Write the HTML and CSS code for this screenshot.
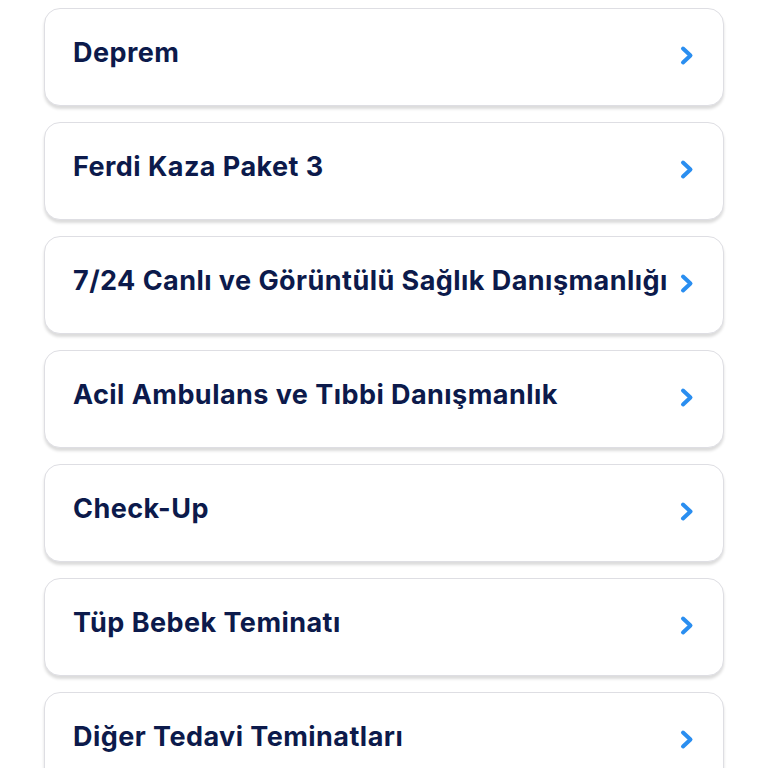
FILE: index.html
```html
<!DOCTYPE html>
<html lang="tr">
<head>
    <meta charset="UTF-8">
    <meta name="viewport" content="width=device-width, initial-scale=1.0">
    <title>Teminatlar</title>
    <link rel="stylesheet" href="styles.css">
</head>
<body>
    <div class="list">
        <div class="item"><span class="label">Deprem</span><svg class="chev" viewBox="0 0 14 21"><path d="M3 3.5l7.5 7-7.5 7"/></svg></div>
        <div class="item"><span class="label">Ferdi Kaza Paket 3</span><svg class="chev" viewBox="0 0 14 21"><path d="M3 3.5l7.5 7-7.5 7"/></svg></div>
        <div class="item"><span class="label">7/24 Canlı ve Görüntülü Sağlık Danışmanlığı</span><svg class="chev" viewBox="0 0 14 21"><path d="M3 3.5l7.5 7-7.5 7"/></svg></div>
        <div class="item"><span class="label">Acil Ambulans ve Tıbbi Danışmanlık</span><svg class="chev" viewBox="0 0 14 21"><path d="M3 3.5l7.5 7-7.5 7"/></svg></div>
        <div class="item"><span class="label">Check-Up</span><svg class="chev" viewBox="0 0 14 21"><path d="M3 3.5l7.5 7-7.5 7"/></svg></div>
        <div class="item"><span class="label">Tüp Bebek Teminatı</span><svg class="chev" viewBox="0 0 14 21"><path d="M3 3.5l7.5 7-7.5 7"/></svg></div>
        <div class="item"><span class="label">Diğer Tedavi Teminatları</span><svg class="chev" viewBox="0 0 14 21"><path d="M3 3.5l7.5 7-7.5 7"/></svg></div>
    </div>
</body>
</html>
```

FILE: styles.css
```css
body {
    margin: 0;
    padding: 0;
    background-color: #ffffff;
    font-family: Inter, "Noto Sans", sans-serif;
    overflow: hidden;
}
.list {
    display: flex;
    flex-direction: column;
    gap: 16px;
    padding: 8px 44px 0 44px;
}
.item {
    height: 96px;
    border: 1px solid #dedee3;
    border-radius: 16px;
    box-shadow: 0 3px 3px rgba(0, 0, 0, 0.14);
    display: flex;
    align-items: flex-start;
    justify-content: space-between;
    padding: 0 29px 0 28px;
    box-sizing: content-box;
    background: #fff;
}
.label {
    margin-top: 27px;
    font-size: 27px;
    font-weight: 700;
    color: #0c1a4b;
    letter-spacing: 0.45px;
    white-space: nowrap;
}
.chev {
    width: 14px;
    height: 21px;
    margin-top: 36px;
    fill: none;
    stroke: #2a8ef0;
    stroke-width: 4;
    stroke-linecap: round;
    stroke-linejoin: round;
}
```
